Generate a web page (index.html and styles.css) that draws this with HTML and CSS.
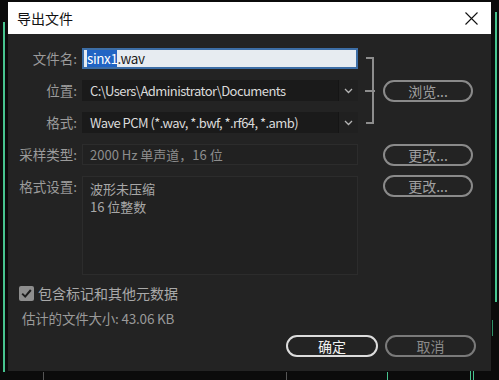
FILE: index.html
```html
<!DOCTYPE html>
<html>
<head>
    <title>导出文件</title>
    <link rel="stylesheet" href="styles.css">
</head>
<body>
    <div class="dialog">
        <div class="titlebar">
            <span class="title">导出文件</span>
            <span class="close">
                <svg width="13" height="13" viewBox="0 0 13 13"><path d="M0.5 0.5 L12.5 12.5 M12.5 0.5 L0.5 12.5" stroke="#111" stroke-width="1.1" fill="none"/></svg>
            </span>
        </div>

        <div class="content">
            <div class="form-grid">
                <label class="lbl row1">文件名:</label>
                <div class="field name-input row1"><span class="sel">sinx1</span>.wav</div>

                <label class="lbl row2">位置:</label>
                <div class="field dropdown row2">
                    <span class="value">C:\Users\Administrator\Documents</span>
                    <span class="chev"><svg width="9" height="6" viewBox="0 0 9 6"><path d="M1 1 L4.5 4.5 L8 1" stroke="#b5b5b5" stroke-width="1.3" fill="none"/></svg></span>
                </div>

                <label class="lbl row3">格式:</label>
                <div class="field dropdown row3">
                    <span class="value">Wave PCM (*.wav, *.bwf, *.rf64, *.amb)</span>
                    <span class="chev"><svg width="9" height="6" viewBox="0 0 9 6"><path d="M1 1 L4.5 4.5 L8 1" stroke="#b5b5b5" stroke-width="1.3" fill="none"/></svg></span>
                </div>

                <div class="bracket"></div>
                <button type="button" class="pill row2 side">浏览...</button>

                <label class="lbl row4">采样类型:</label>
                <div class="field readonly row4">2000 Hz 单声道，16 位</div>
                <button type="button" class="pill row4 side">更改...</button>

                <label class="lbl row5 top">格式设置:</label>
                <div class="field settings row5">
                    <div>波形未压缩</div>
                    <div>16 位整数</div>
                </div>
                <button type="button" class="pill row5 side top">更改...</button>
            </div>

            <label class="check">
                <span class="box"><svg width="15" height="15" viewBox="0 0 15 15"><rect x="0" y="0" width="15" height="15" rx="2" fill="#8e8e8e"/><path d="M3.2 7.6 L6.2 10.6 L11.8 4" stroke="#1e1e1e" stroke-width="2" fill="none"/></svg></span>
                包含标记和其他元数据
            </label>

            <p class="size">估计的文件大小: 43.06 KB</p>

            <div class="actions">
                <button type="button" class="pill ok">确定</button>
                <button type="button" class="pill cancel">取消</button>
            </div>
        </div>
    </div>
</body>
</html>
```

FILE: styles.css
```css
body {
    margin: 0;
    height: 380px;
    padding: 2px 8px 0 8px;
    box-sizing: border-box;
    font-family: "Noto Sans CJK SC", "Noto Sans", sans-serif;
    background:
        linear-gradient(#47c48f, #47c48f) 3px 22px / 2px 350px no-repeat,
        linear-gradient(#47c48f, #47c48f) 495px 12px / 2px 290px no-repeat,
        linear-gradient(#2f8f67, #2f8f67) 492px 320px / 1px 16px no-repeat,
        linear-gradient(#47c48f, #47c48f) 470px 371px / 1px 9px no-repeat,
        linear-gradient(#47c48f, #47c48f) 473px 371px / 1px 9px no-repeat,
        linear-gradient(#47c48f, #47c48f) 387px 372px / 1px 8px no-repeat,
        linear-gradient(#555, #555) 43px 372px / 1px 8px no-repeat,
        linear-gradient(#555, #555) 286px 372px / 1px 8px no-repeat,
        #0b0b0b;
}

.dialog {
    width: 483px;
    height: 369px;
    background: #232323;
    display: flex;
    flex-direction: column;
}

.titlebar {
    height: 32px;
    background: #ffffff;
    display: flex;
    align-items: center;
    justify-content: space-between;
    padding: 0 13px 0 9px;
}

.title {
    font-size: 14px;
    color: #111;
}

.close {
    display: flex;
}

.content {
    padding-top: 14px;
    flex: 1;
    display: flex;
    flex-direction: column;
}

.form-grid {
    display: grid;
    grid-template-columns: 74px 276px 25px 90px;
    grid-template-rows: 21px 21px 21px 21px 99px;
    row-gap: 11px;
}

.row1 { grid-row: 1; }
.row2 { grid-row: 2; }
.row3 { grid-row: 3; }
.row4 { grid-row: 4; }
.row5 { grid-row: 5; }

.lbl {
    grid-column: 1;
    text-align: right;
    padding-right: 5px;
    font-size: 13.5px;
    color: #9b9b9b;
    line-height: 21px;
}

.lbl.top {
    align-self: start;
}

.field {
    grid-column: 2;
    box-sizing: border-box;
    font-size: 13px;
}

.name-input {
    background: #e7ecf1;
    border: 2px solid #3d6ea6;
    color: #1a1a1a;
    font-size: 13.5px;
    letter-spacing: -0.4px;
    line-height: 17px;
    padding-left: 3px;
}

.sel {
    display: inline-block;
    height: 17px;
    background: #2164c4;
    color: #ffffff;
}

.dropdown {
    display: flex;
    background: #1a1a1a;
    color: #dadada;
}

.dropdown .value {
    flex: 1;
    padding-left: 8px;
    line-height: 21px;
    letter-spacing: -0.55px;
    white-space: nowrap;
    overflow: hidden;
}

.chev {
    width: 19px;
    background: #202020;
    border-left: 1px solid #151515;
    display: flex;
    align-items: center;
    justify-content: center;
}

.readonly {
    border: 1px solid #2c2c2c;
    background: #212121;
    color: #8e8e8e;
    line-height: 19px;
    padding-left: 7px;
}

.settings {
    border: 1px solid #2c2c2c;
    background: #212121;
    color: #a8a8a8;
    line-height: 18px;
    padding: 3px 0 0 7px;
}

.bracket {
    grid-column: 3;
    grid-row: 1 / 4;
    margin: 9px 9px 9px 8px;
    border: 2px solid #8d8d8d;
    border-left: none;
    position: relative;
}

.bracket::after {
    content: "";
    position: absolute;
    top: 50%;
    left: -1px;
    width: 10px;
    height: 2px;
    margin-top: -1px;
    background: #8d8d8d;
}

.pill {
    background: transparent;
    border: 2px solid #8a8a8a;
    border-radius: 12px;
    color: #a0a0a0;
    font-family: inherit;
    font-size: 14px;
    padding: 0;
    height: 22px;
    line-height: 18px;
    cursor: pointer;
}

.side {
    grid-column: 4;
}

.pill.top {
    align-self: start;
    margin-top: -1px;
}

.check {
    display: flex;
    align-items: center;
    gap: 4px;
    margin: 10px 0 0 11px;
    font-size: 14px;
    color: #a9a9a9;
    height: 16px;
}

.box {
    display: flex;
}

.size {
    margin: 8px 0 0 14px;
    font-size: 13.5px;
    letter-spacing: -0.2px;
    line-height: 18px;
    color: #9a9a9a;
}

.actions {
    display: flex;
    justify-content: flex-end;
    gap: 7px;
    margin-top: 8px;
    padding-right: 15px;
}

.ok {
    width: 92px;
    border-color: #dcdcdc;
    color: #f2f2f2;
}

.cancel {
    width: 91px;
    border-color: #7a7a7a;
    color: #8a8a8a;
}
```
